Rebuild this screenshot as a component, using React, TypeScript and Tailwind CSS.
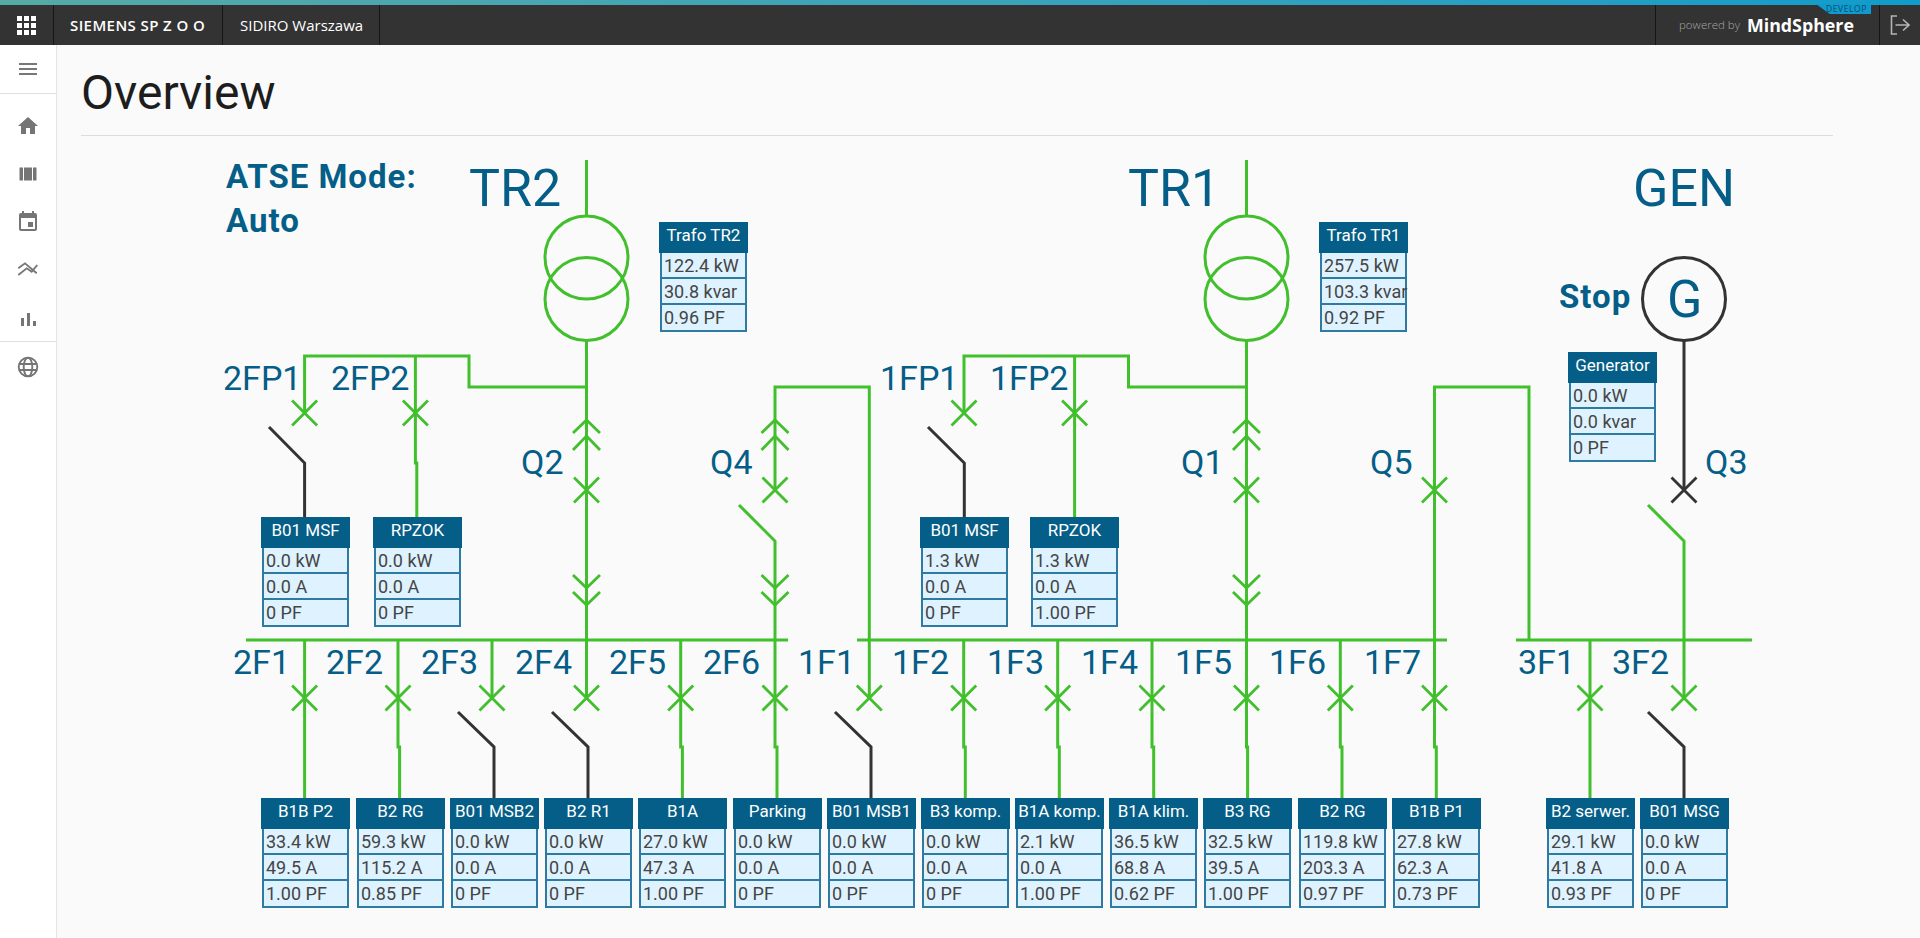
import React from 'react'

// page coordinates of the top left corner of the diagram canvas
const OX = 57
const OY = 136

const GREEN = '#41bf2c'
const DARK = '#333333'

type Box = { x: number; y: number; title: string; rows: string[] }

const boxes: Box[] = [
  { x: 659, y: 222, title: 'Trafo TR2', rows: ['122.4 kW', '30.8 kvar', '0.96 PF'] },
  { x: 1319, y: 222, title: 'Trafo TR1', rows: ['257.5 kW', '103.3 kvar', '0.92 PF'] },
  { x: 1568, y: 352, title: 'Generator', rows: ['0.0 kW', '0.0 kvar', '0 PF'] },
  { x: 261, y: 517, title: 'B01 MSF', rows: ['0.0 kW', '0.0 A', '0 PF'] },
  { x: 373, y: 517, title: 'RPZOK', rows: ['0.0 kW', '0.0 A', '0 PF'] },
  { x: 920, y: 517, title: 'B01 MSF', rows: ['1.3 kW', '0.0 A', '0 PF'] },
  { x: 1030, y: 517, title: 'RPZOK', rows: ['1.3 kW', '0.0 A', '1.00 PF'] },
  { x: 261, y: 798, title: 'B1B P2', rows: ['33.4 kW', '49.5 A', '1.00 PF'] },
  { x: 356, y: 798, title: 'B2 RG', rows: ['59.3 kW', '115.2 A', '0.85 PF'] },
  { x: 450, y: 798, title: 'B01 MSB2', rows: ['0.0 kW', '0.0 A', '0 PF'] },
  { x: 544, y: 798, title: 'B2 R1', rows: ['0.0 kW', '0.0 A', '0 PF'] },
  { x: 638, y: 798, title: 'B1A', rows: ['27.0 kW', '47.3 A', '1.00 PF'] },
  { x: 733, y: 798, title: 'Parking', rows: ['0.0 kW', '0.0 A', '0 PF'] },
  { x: 827, y: 798, title: 'B01 MSB1', rows: ['0.0 kW', '0.0 A', '0 PF'] },
  { x: 921, y: 798, title: 'B3 komp.', rows: ['0.0 kW', '0.0 A', '0 PF'] },
  { x: 1015, y: 798, title: 'B1A komp.', rows: ['2.1 kW', '0.0 A', '1.00 PF'] },
  { x: 1109, y: 798, title: 'B1A klim.', rows: ['36.5 kW', '68.8 A', '0.62 PF'] },
  { x: 1203, y: 798, title: 'B3 RG', rows: ['32.5 kW', '39.5 A', '1.00 PF'] },
  { x: 1298, y: 798, title: 'B2 RG', rows: ['119.8 kW', '203.3 A', '0.97 PF'] },
  { x: 1392, y: 798, title: 'B1B P1', rows: ['27.8 kW', '62.3 A', '0.73 PF'] },
  { x: 1546, y: 798, title: 'B2 serwer.', rows: ['29.1 kW', '41.8 A', '0.93 PF'] },
  { x: 1640, y: 798, title: 'B01 MSG', rows: ['0.0 kW', '0.0 A', '0 PF'] },
]

// text, left edge, baseline, font size
const labels: [string, number, number, number][] = [
  ['TR2', 469, 207, 52],
  ['TR1', 1128, 207, 52],
  ['GEN', 1633, 207, 52],
  ['G', 1667, 318, 52],
  ['2FP1', 223, 390, 34],
  ['2FP2', 331, 390, 34],
  ['1FP1', 880, 390, 34],
  ['1FP2', 990, 390, 34],
  ['Q2', 521, 474, 34],
  ['Q4', 710, 474, 34],
  ['Q1', 1181, 474, 34],
  ['Q5', 1370, 474, 34],
  ['Q3', 1705, 474, 34],
  ['2F1', 233, 674, 34],
  ['2F2', 326, 674, 34],
  ['2F3', 421, 674, 34],
  ['2F4', 515, 674, 34],
  ['2F5', 609, 674, 34],
  ['2F6', 703, 674, 34],
  ['1F1', 798, 674, 34],
  ['1F2', 892, 674, 34],
  ['1F3', 987, 674, 34],
  ['1F4', 1081, 674, 34],
  ['1F5', 1175, 674, 34],
  ['1F6', 1269, 674, 34],
  ['1F7', 1364, 674, 34],
  ['3F1', 1518, 674, 34],
  ['3F2', 1612, 674, 34],
]

const boldLabels: [string, number, number][] = [
  ['ATSE Mode:', 226, 188],
  ['Auto', 226, 232],
  ['Stop', 1559, 308],
]

const greenPaths = [
  // TR2 side
  'M586.5 160V216',
  'M586.5 341V698',
  'M304.6 413V356H469V387H586.5',
  'M415.4 356V463H416.8V517',
  // Q4 tie to 1F1
  'M775 490V387H869.3V698',
  'M739 505L775 541V698V747H777V798',
  // bus bars
  'M246 640H788',
  'M857 640H1447',
  'M1516 640H1752',
  // TR1 side
  'M1246.5 160V216',
  'M1246.5 341V747H1247.6V798',
  'M964 413V356H1128.5V387H1246.5',
  'M1074.6 356V517',
  // feeders
  'M304.6 640V798',
  'M398 640V747H399.6V798',
  'M492 640V698',
  'M680.7 640V747H682.4V798',
  'M963.7 640V747H965.3V798',
  'M1057.7 640V747H1059.3V798',
  'M1152 640V747H1153.7V798',
  'M1340.3 640V747H1342V798',
  // Q5 and generator section
  'M1434.5 490V747H1436.3V798',
  'M1434.5 490V387H1529V640',
  'M1590 640V798',
  'M1648 505L1684 541V698',
]

const darkPaths = [
  'M1684 341V490',
  'M269 427L304.6 463V517',
  'M928 427L964.3 463V517',
  'M458 712L494 747V798',
  'M552 712L588 747V798',
  'M835 712L871 747V798',
  'M1648 712L1684 747V798',
]

const crosses: [number, number][] = [
  [304.6, 413], [415.4, 413], [964, 413], [1074.6, 413],
  [586.5, 490], [775, 490], [1246.5, 490], [1434.5, 490],
  [304.6, 698], [398, 698], [492, 698], [586.5, 698], [680.7, 698], [775, 698],
  [869.3, 698], [963.7, 698], [1057.7, 698], [1152, 698], [1246.5, 698], [1340.3, 698], [1434.5, 698],
  [1590, 698], [1684, 698],
]

const Cross = ({ x, y, color }: { x: number; y: number; color: string }) => (
  <path d={`M${x - 12.5} ${y - 12.5}L${x + 12.5} ${y + 12.5}M${x + 12.5} ${y - 12.5}L${x - 12.5} ${y + 12.5}`} stroke={color} strokeWidth="2.8" fill="none" />
)

const Chevrons = ({ x }: { x: number }) => (
  <path
    d={`M${x - 13.5} 433L${x} 420L${x + 13.5} 433M${x - 13.5} 450L${x} 436L${x + 13.5} 450M${x - 13.5} 575L${x} 588L${x + 13.5} 575M${x - 13.5} 592L${x} 605L${x + 13.5} 592`}
    stroke={GREEN}
    strokeWidth="2.8"
    fill="none"
  />
)

const DataBox = ({ box }: { box: Box }) => (
  <div className="absolute w-[89px]" style={{ left: box.x - OX, top: box.y - OY }}>
    <div className="h-[31px] bg-[#045e87] text-center text-[17px] leading-[26px] text-white whitespace-nowrap">
      {box.title}
    </div>
    <div className="mx-px border-x-2 border-b-2 border-[#2f7aa0] bg-[#def3ff] text-[18px] text-[#454545]">
      {box.rows.map((row, i) => (
        <div key={i} className={i < 2 ? 'h-[26px] border-b-2 border-[#2f7aa0] pl-[2px] leading-[25px] whitespace-nowrap' : 'h-[25px] pl-[2px] leading-[25px] whitespace-nowrap'}>
          {row}
        </div>
      ))}
    </div>
  </div>
)

const Diagram = () => (
  <div className="relative flex-1 overflow-hidden">
    <svg className="absolute left-0 top-0" width="1863" height="802" viewBox={`${OX} ${OY} 1863 802`}>
      <g fill="none" stroke={GREEN} strokeWidth="3">
        {greenPaths.map((d, i) => (
          <path key={i} d={d} />
        ))}
        <circle cx="586.5" cy="257.5" r="41.5" />
        <circle cx="586.5" cy="299" r="41.5" />
        <circle cx="1246.5" cy="257.5" r="41.5" />
        <circle cx="1246.5" cy="299" r="41.5" />
      </g>
      <g fill="none" stroke={DARK} strokeWidth="3">
        {darkPaths.map((d, i) => (
          <path key={i} d={d} />
        ))}
        <circle cx="1684" cy="299" r="41.5" />
      </g>
      {crosses.map(([x, y], i) => (
        <Cross key={i} x={x} y={y} color={GREEN} />
      ))}
      <Cross x={1684} y={490} color={DARK} />
      <Chevrons x={586.5} />
      <Chevrons x={775} />
      <Chevrons x={1246.5} />
    </svg>
    {labels.map(([text, x, y, size]) => (
      <div
        key={text}
        className="absolute whitespace-nowrap text-[#045e87]"
        style={{ left: x - OX, top: y - OY - size * 0.841, fontSize: size, lineHeight: `${size}px` }}
      >
        {text}
      </div>
    ))}
    {boldLabels.map(([text, x, y]) => (
      <div
        key={text}
        className="absolute whitespace-nowrap text-[33px] leading-[33px] font-bold tracking-[1px] text-[#045e87]"
        style={{ left: x - OX, top: y - OY - 28 }}
      >
        {text}
      </div>
    ))}
    {boxes.map((box, i) => (
      <DataBox key={i} box={box} />
    ))}
  </div>
)

const Sep = () => <div className="w-px self-stretch bg-[#161616]" />

const TopBar = () => (
  <header className="relative">
    <div className="h-[5px] bg-gradient-to-r from-[#55aaa6] to-[#0f9ccb]" />
    <div className="flex h-[40px] items-center bg-[#333333] font-['Open_Sans',sans-serif] text-[15px] text-white">
      <div className="flex w-[53px] justify-center pr-[1px]">
        <div className="grid w-[19px] grid-cols-3 gap-[2px]">
          {Array.from({ length: 9 }).map((_, i) => (
            <div key={i} className="h-[5px] w-[5px] bg-white" />
          ))}
        </div>
      </div>
      <Sep />
      <div className="w-[168px] pl-[16px] font-semibold tracking-[0.4px] whitespace-nowrap">SIEMENS SP Z O O</div>
      <Sep />
      <div className="w-[156px] pl-[17px] whitespace-nowrap">SIDIRO Warszawa</div>
      <Sep />
      <div className="flex-1" />
      <Sep />
      <div className="flex w-[223px] items-center pl-[23px] whitespace-nowrap">
        <span className="text-[11.5px] font-light text-[#a5a5a5]">powered by</span>
        <span className="ml-[7px] text-[17.8px] font-bold">MindSphere</span>
      </div>
      <Sep />
      <div className="flex w-[40px] justify-center">
        <svg width="20" height="20" viewBox="0 0 20 20" fill="none" stroke="#b5b5b5" strokeWidth="1.6">
          <path d="M7 1H1.5V19H7M5.5 10H19M13 4.5L19 10L13 15.5" />
        </svg>
      </div>
    </div>
    <div className="absolute left-[1816px] top-[4px] flex h-[10px] w-[55px] items-center justify-end bg-[#0f9bd0] pr-[4px] font-['Open_Sans',sans-serif] text-[8.5px] tracking-[0.6px] text-[#0b4a66] [clip-path:polygon(0_0,100%_0,100%_100%,25%_100%)]">
      DEVELOP
    </div>
  </header>
)

const SideIcon = ({ children }: { children: React.ReactNode }) => (
  <svg width="24" height="24" viewBox="0 0 24 24" fill="#757575">
    {children}
  </svg>
)

const SideBar = () => (
  <aside className="flex w-[57px] shrink-0 flex-col items-center border-r border-[#e4e4e4] bg-white">
    <div className="flex h-[49px] w-full items-center justify-center border-b border-[#dfdfdf]">
      <div className="flex w-[18px] flex-col gap-[3px] pb-[1px]">
        <div className="h-[2px] bg-[#777777]" />
        <div className="h-[2px] bg-[#777777]" />
        <div className="h-[2px] bg-[#777777]" />
      </div>
    </div>
    <div className="flex h-[248px] w-full flex-col items-center gap-[24px] border-b border-[#dfdfdf] pt-[20px]">
      <SideIcon>
        <path d="M10 20v-6h4v6h5v-8h3L12 3 2 12h3v8z" />
      </SideIcon>
      <SideIcon>
        <path d="M3.500 5.500h3.500v13H3.500zM8 5.500h8v13H8zM17 5.500h3.500v13H17z" />
      </SideIcon>
      <SideIcon>
        <path d="M17 12h-5v5h5v-5zM16 1v2H8V1H6v2H5c-1.110 0-1.990.9-1.990 2L3 19c0 1.100.89 2 2 2h14c1.100 0 2-.9 2-2V5c0-1.100-.9-2-2-2h-1V1h-2zm3 18H5V8h14v11z" />
      </SideIcon>
      <SideIcon>
        <path d="M2.300 10.300L9 5.300L20.700 15.300M2.300 17L10.700 10.300L15.700 13.700L21.300 7" fill="none" stroke="#757575" strokeWidth="1.800" />
      </SideIcon>
      <SideIcon>
        <path d="M5 12h3v8H5zM11 7h3v13h-3zM17 15h3v5h-3z" />
      </SideIcon>
    </div>
    <div className="pt-[13px]">
      <SideIcon>
        <g fill="none" stroke="#757575" strokeWidth="1.900">
          <circle cx="12" cy="12" r="9.300" />
          <ellipse cx="12" cy="12" rx="4.300" ry="9.300" />
          <path d="M3 9h18M3 15h18" />
        </g>
      </SideIcon>
    </div>
  </aside>
)

export default function App() {
  return (
    <div className="flex h-[938px] w-full flex-col overflow-hidden bg-[#fafafa] font-['Roboto',sans-serif]">
      <TopBar />
      <div className="flex min-h-0 flex-1">
        <SideBar />
        <main className="flex min-w-0 flex-1 flex-col">
          <div className="ml-[24px] mr-[87px] h-[91px] border-b border-[#dcdcdc] pt-[22px] text-[48px] leading-[52px] text-[#1d1d1d]">
            Overview
          </div>
          <Diagram />
        </main>
      </div>
    </div>
  )
}
